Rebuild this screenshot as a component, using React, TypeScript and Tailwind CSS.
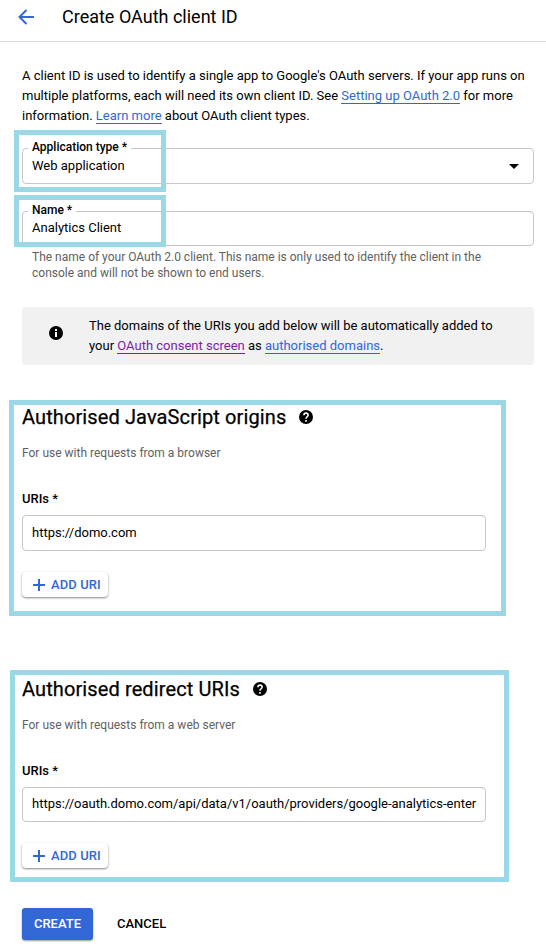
import type { ReactNode } from "react";

function Link({ children, visited = false }: { children: ReactNode; visited?: boolean }) {
  return (
    <a
      className={
        visited
          ? "inline-block h-[17px] border-b border-[#7b1fa2] leading-[17px] text-[#7b1fa2]"
          : "inline-block h-[17px] border-b border-[#3367d6] leading-[17px] text-[#3367d6]"
      }
    >
      {children}
    </a>
  );
}

function Highlight({ className }: { className: string }) {
  return <div className={`pointer-events-none absolute border-[5px] border-[#9ad8e8] ${className}`} />;
}

function HelpIcon() {
  return (
    <svg className="-mt-px size-4" viewBox="0 0 16 16">
      <circle cx="8" cy="8" r="7" />
      <path d="M5.900 6.200a2.100 2.100 0 0 1 4.200 0c0 1.500-2.100 1.700-2.100 3.600M8 11v1.700" fill="none" stroke="#fff" strokeWidth="1.600" />
    </svg>
  );
}

function AddButton() {
  return (
    <button className="flex h-[25px] w-[86px] items-center rounded-[4px] bg-white pl-[11px] text-[13px] font-medium text-[#3367d6] shadow-[0_1px_2px_rgba(0,0,0,0.4),0_1px_3px_rgba(0,0,0,0.1)]">
      <svg className="mr-[6px] size-3 shrink-0" viewBox="0 0 12 12" fill="#3367d6">
        <path d="M5 0h2v5h5v2H7v5H5V7H0V5h5z" />
      </svg>
      <span className="whitespace-nowrap tracking-[0.1px]">ADD URI</span>
    </button>
  );
}

function UriSection({
  title,
  hint,
  value,
  className,
  fieldClass,
}: {
  title: string;
  hint: string;
  value: string;
  className: string;
  fieldClass: string;
}) {
  return (
    <section className={`border-[5px] border-[#9ad8e8] ${className}`}>
      <div className="flex h-6 items-center gap-3">
        <h2 className="whitespace-nowrap text-[20px] leading-6 tracking-[0.11px] [-webkit-text-stroke:0.25px_black]">{title}</h2>
        <HelpIcon />
      </div>
      <p className="mt-4 text-[12px] leading-4 text-[#616161]">{hint}</p>
      <p className="mt-[30px] text-[13px] font-medium leading-4">URIs *</p>
      <div
        className={`flex w-[464px] items-center overflow-hidden whitespace-nowrap rounded-[4px] border border-[#c6c6c6] px-[9px] ${fieldClass}`}
      >
        {value}
      </div>
      <AddButton />
    </section>
  );
}

export default function App() {
  return (
    <div className="h-[947px] w-[546px] overflow-hidden bg-white font-['Roboto',sans-serif] text-[13px] text-black">
      <header className="flex h-[42px] items-center border-b border-[#dadada] pb-[8px] pl-[18px]">
        <svg className="h-4 w-4" viewBox="0 0 16 16" fill="none" stroke="#3367d6" strokeWidth="2">
          <path d="M16 8H1.500M8.500 1L1.500 8l7 7" />
        </svg>
        <h1 className="ml-[28px] whitespace-nowrap text-[18px]">Create OAuth client ID</h1>
      </header>

      <main>
        <p className="mt-6 whitespace-nowrap pl-[22px] leading-5">
          A client ID is used to identify a single app to Google's OAuth servers. If your app runs on
          <br />
          multiple platforms, each will need its own client ID. See <Link>Setting up OAuth 2.0</Link> for more
          <br />
          information. <Link>Learn more</Link> about OAuth client types.
        </p>

        <div className="relative ml-[22px] mt-[22px] flex h-9 w-[512px] items-center justify-between rounded-[4px] border border-[#c6c6c6] pl-[9px] pr-[14px]">
          <label className="absolute -top-[10px] left-[5px] whitespace-nowrap bg-white px-1 text-[12px] font-medium leading-4">
            Application type *
          </label>
          <span>Web application</span>
          <svg className="h-[5px] w-[10px]" viewBox="0 0 10 5">
            <path d="M0 0h10L5 5z" />
          </svg>
          <Highlight className="-left-[9px] -top-[19px] h-[62px] w-[152px]" />
        </div>

        <div className="relative ml-[22px] mt-[27px] flex h-[35px] w-[512px] items-center rounded-[4px] border border-[#c6c6c6] pb-[2px] pl-[9px]">
          <label className="absolute -top-[10px] left-[5px] whitespace-nowrap bg-white px-1 text-[12px] font-medium leading-4">
            Name *
          </label>
          <span>Analytics Client</span>
          <Highlight className="-left-[9px] -top-[17px] h-[52px] w-[152px]" />
        </div>
        <p className="mt-[3px] whitespace-nowrap pl-[32px] text-[12px] leading-4 text-[#616161]">
          The name of your OAuth 2.0 client. This name is only used to identify the client in the
          <br />
          console and will not be shown to end users.
        </p>

        <div className="ml-[22px] mt-[26px] flex h-[58px] w-[512px] items-center rounded-[4px] bg-[#f1f1f1] pl-[26px]">
          <svg className="-mt-[6px] size-4" viewBox="0 0 16 16">
            <circle cx="8" cy="8" r="7" />
            <path d="M7 4h2v2H7zM7 7h2v5H7z" fill="#fff" />
          </svg>
          <p className="ml-[25px] whitespace-nowrap leading-5">
            The domains of the URIs you add below will be automatically added to
            <br />
            your <Link visited>OAuth consent screen</Link> as <Link>authorised domains</Link>.
          </p>
        </div>

        <UriSection
          title="Authorised JavaScript origins"
          hint="For use with requests from a browser"
          value="https://domo.com"
          className="ml-[9px] mt-[35px] h-[216px] w-[497px] pl-2"
          fieldClass="mb-[21px] mt-2 h-9"
        />
        <UriSection
          title="Authorised redirect URIs"
          hint="For use with requests from a web server"
          value="https://oauth.domo.com/api/data/v1/oauth/providers/google-analytics-enter"
          className="ml-[10px] mt-[54px] h-[212px] w-[499px] pl-[7px] pt-[2px]"
          fieldClass="mb-[21px] mt-2 h-[35px] pb-[1px] tracking-[-0.01px]"
        />

        <div className="ml-[22px] mt-[26px] flex h-8 items-center font-medium">
          <button className="h-8 w-[71px] rounded-[3px] bg-[#3367d6] text-[13px] text-white shadow-[0_1px_2px_rgba(0,0,0,0.4)]">
            CREATE
          </button>
          <button className="ml-6 text-[13px]">CANCEL</button>
        </div>
      </main>
    </div>
  );
}
